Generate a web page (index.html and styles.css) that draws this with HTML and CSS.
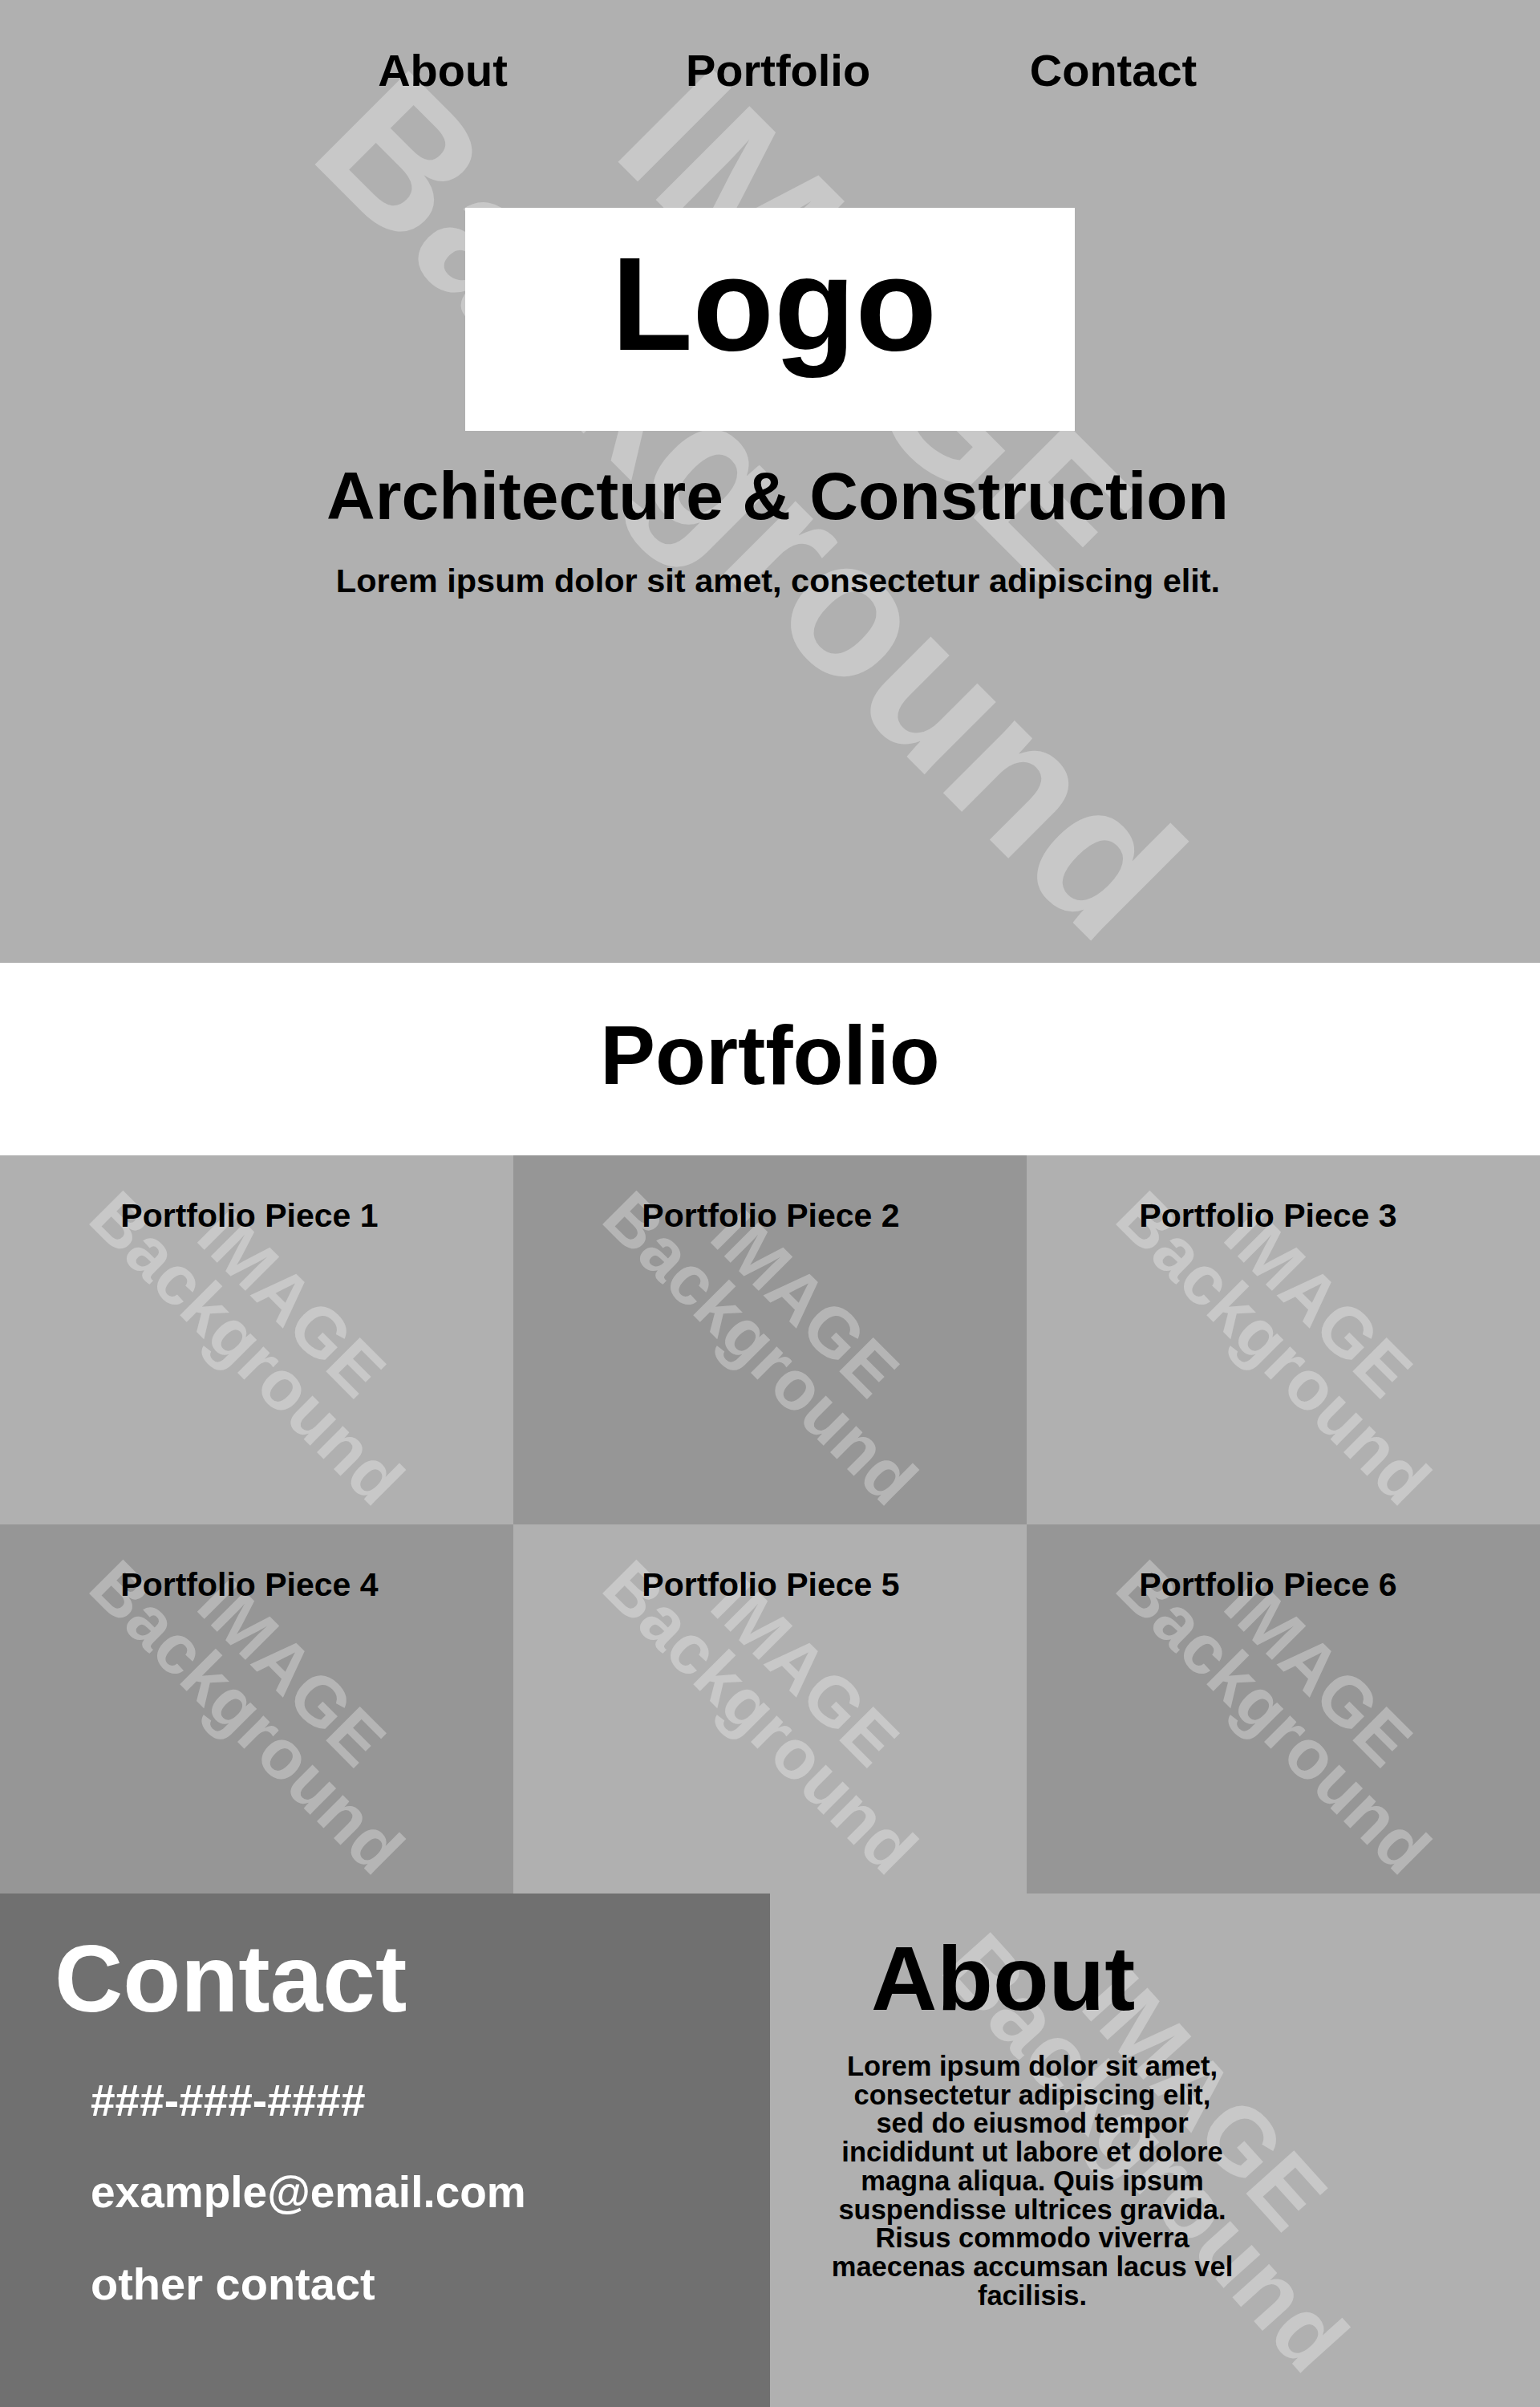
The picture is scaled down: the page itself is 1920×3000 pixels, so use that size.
FILE: index.html
```html
<!DOCTYPE html>
<html lang="en">
<head>
<meta charset="utf-8">
<title>Architecture &amp; Construction</title>
<link rel="stylesheet" href="styles.css">
</head>
<body>
<header class="hero">
  <div class="wm" aria-hidden="true">
    <span class="wm-line hero-1">IMAGE</span>
    <span class="wm-line hero-2">Background</span>
  </div>
  <nav class="nav">
    <a href="#about">About</a>
    <a href="#portfolio">Portfolio</a>
    <a href="#contact">Contact</a>
  </nav>
  <div class="logo"><span>Logo</span></div>
  <h1 class="title">Architecture &amp; Construction</h1>
  <p class="tagline">Lorem ipsum dolor sit amet, consectetur adipiscing elit.</p>
</header>

<section class="portfolio" id="portfolio">
  <h2 class="portfolio-title">Portfolio</h2>
  <div class="grid">
    <article class="tile light"><div class="wm" aria-hidden="true"><span class="wm-line tile-1">IMAGE</span><span class="wm-line tile-2">Background</span></div><h3>Portfolio Piece 1</h3></article>
    <article class="tile dark"><div class="wm" aria-hidden="true"><span class="wm-line tile-1">IMAGE</span><span class="wm-line tile-2">Background</span></div><h3>Portfolio Piece 2</h3></article>
    <article class="tile light"><div class="wm" aria-hidden="true"><span class="wm-line tile-1">IMAGE</span><span class="wm-line tile-2">Background</span></div><h3>Portfolio Piece 3</h3></article>
    <article class="tile dark"><div class="wm" aria-hidden="true"><span class="wm-line tile-1">IMAGE</span><span class="wm-line tile-2">Background</span></div><h3>Portfolio Piece 4</h3></article>
    <article class="tile light"><div class="wm" aria-hidden="true"><span class="wm-line tile-1">IMAGE</span><span class="wm-line tile-2">Background</span></div><h3>Portfolio Piece 5</h3></article>
    <article class="tile dark"><div class="wm" aria-hidden="true"><span class="wm-line tile-1">IMAGE</span><span class="wm-line tile-2">Background</span></div><h3>Portfolio Piece 6</h3></article>
  </div>
</section>

<section class="bottom">
  <div class="contact" id="contact">
    <h2>Contact</h2>
    <ul class="contact-list">
      <li>###-###-####</li>
      <li>example@email.com</li>
      <li>other contact</li>
    </ul>
  </div>
  <div class="about" id="about">
    <div class="wm" aria-hidden="true">
      <span class="wm-line about-1">IMAGE</span>
      <span class="wm-line about-2">Background</span>
    </div>
    <h2>About</h2>
    <p>Lorem ipsum dolor sit amet,<br>consectetur adipiscing elit,<br>sed do eiusmod tempor<br>incididunt ut labore et dolore<br>magna aliqua. Quis ipsum<br>suspendisse ultrices gravida.<br>Risus commodo viverra<br>maecenas accumsan lacus vel<br>facilisis.</p>
  </div>
</section>
</body>
</html>
```

FILE: styles.css
```css
* {
  box-sizing: border-box;
  margin: 0;
  padding: 0;
}

body {
  font-family: "Liberation Sans", Arial, sans-serif;
  font-weight: 700;
  color: #000;
  background: #fff;
}

/* watermark placeholder text (background image stand-in) */
.wm {
  position: absolute;
  inset: 0;
  pointer-events: none;
}

.wm-line {
  position: absolute;
  white-space: nowrap;
  color: rgba(255, 255, 255, 0.3);
  font-family: "Liberation Sans", Arial, sans-serif;
  font-weight: 700;
  line-height: 0.75;
  transform: translate(-50%, -50%) rotate(45deg);
}

.hero-1 {
  left: 1096px;
  top: 410px;
  font-size: 240px;
}

.hero-2 {
  left: 935px;
  top: 630px;
  font-size: 240px;
}

.tile-1 {
  left: 364px;
  top: 184px;
  font-size: 87px;
}

.tile-2 {
  left: 308px;
  top: 240px;
  font-size: 87px;
}

.about-1 {
  left: 542px;
  top: 257px;
  font-size: 117px;
  transform: translate(-50%, -50%) rotate(48deg);
}

.about-2 {
  left: 468px;
  top: 323px;
  font-size: 117px;
  transform: translate(-50%, -50%) rotate(48deg);
}

/* hero */
.hero {
  position: relative;
  height: 1200px;
  background: #b0b0b0;
  display: flex;
  flex-direction: column;
  align-items: center;
}

.nav {
  position: relative;
  display: flex;
  padding-top: 60px;
  padding-left: 20px;
}

.nav a {
  width: 418px;
  text-align: center;
  font-size: 56px;
  line-height: 56px;
  color: #000;
  text-decoration: none;
}

.logo {
  position: relative;
  margin-top: 143px;
  width: 760px;
  height: 278px;
  background: #fff;
  display: flex;
  justify-content: center;
  padding-top: 37px;
  padding-left: 10px;
  font-size: 166px;
  line-height: 166px;
}

.title {
  position: relative;
  margin-top: 38.5px;
  padding-left: 19px;
  font-size: 84px;
  line-height: 84px;
  font-weight: 700;
}

.tagline {
  position: relative;
  margin-top: 43px;
  padding-left: 20px;
  font-size: 41.5px;
  line-height: 42px;
}

/* portfolio */
.portfolio {
  position: relative;
}

.portfolio-title {
  height: 240px;
  padding-top: 63.5px;
  text-align: center;
  font-size: 103px;
  line-height: 103px;
  font-weight: 700;
  background: #fff;
}

.grid {
  display: grid;
  grid-template-columns: repeat(3, 640px);
  grid-auto-rows: 460px;
}

.tile {
  position: relative;
  overflow: hidden;
  padding-top: 55px;
  text-align: center;
}

.tile.light {
  background: #b0b0b0;
}

.tile.dark {
  background: #969696;
}

.tile h3 {
  position: relative;
  font-size: 41px;
  line-height: 41px;
  font-weight: 700;
}

.tile:nth-child(3n+1) h3 {
  padding-right: 18px;
}

.tile:nth-child(3n+2) h3 {
  padding-left: 2px;
}

.tile:nth-child(3n) h3 {
  padding-right: 38px;
}

/* contact + about */
.bottom {
  display: grid;
  grid-template-columns: 960px 960px;
  height: 640px;
}

.contact {
  background: #707070;
  color: #fff;
  padding: 47px 0 0 68px;
}

.contact h2 {
  font-size: 118px;
  line-height: 118px;
  font-weight: 700;
}

.contact-list {
  list-style: none;
  margin-top: 65.5px;
  padding-left: 45px;
  display: flex;
  flex-direction: column;
  gap: 59px;
  font-size: 55px;
  line-height: 55px;
}

.contact-list li:last-child {
  font-size: 56px;
}

.about {
  position: relative;
  overflow: hidden;
  background: #b0b0b0;
  padding-top: 49px;
}

.about h2 {
  position: relative;
  margin-left: 126px;
  font-size: 114px;
  line-height: 114px;
  font-weight: 700;
}

.about p {
  position: relative;
  margin-left: 27px;
  width: 600px;
  margin-top: 35px;
  text-align: center;
  font-size: 34.5px;
  line-height: 35.7px;
}
```
